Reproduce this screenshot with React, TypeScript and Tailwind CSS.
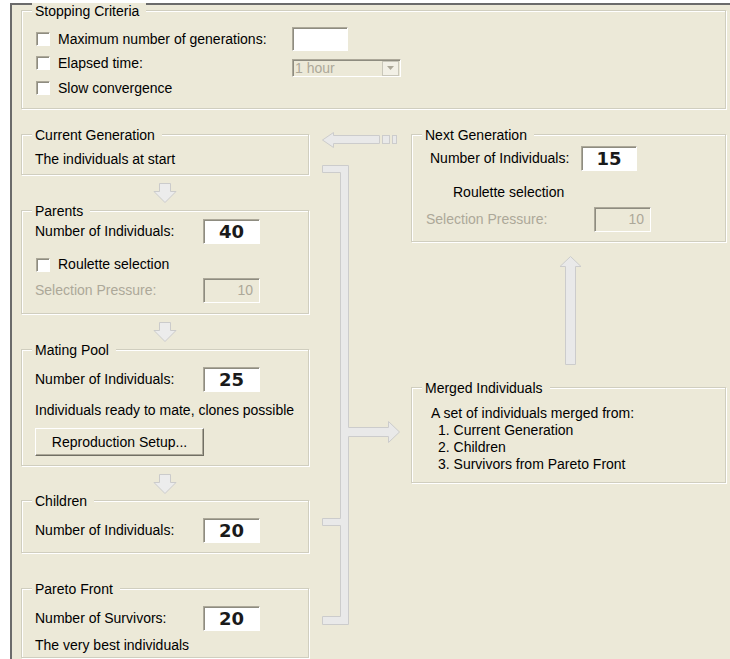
import React from 'react'

// classic XP-ish dialog: evolutionary algorithm setup

interface GroupBoxProps {
  title: string
  className?: string
  children?: React.ReactNode
}

function GroupBox({ title, className = '', children }: GroupBoxProps) {
  return (
    <div
      className={`border border-[#d0cebf] shadow-[inset_1px_1px_0_#ffffff,1px_1px_0_#ffffff] ${className}`}
    >
      <div className="-mt-[8px] ml-[10px] w-fit bg-[#ece9d8] pl-[3px] pr-[7px] leading-[16px]">
        {title}
      </div>
      {children}
    </div>
  )
}

function CheckBox() {
  return (
    <span className="inline-block h-[14px] w-[14px] shrink-0 border border-t-[#aca899] border-l-[#aca899] border-b-white border-r-white bg-white shadow-[inset_1px_1px_0_#8e8c80]" />
  )
}

function NumBox({ value, w = 'w-[57px]' }: { value: string; w?: string }) {
  return (
    <div
      className={`flex h-[25px] ${w} items-center justify-center border border-t-[#aca899] border-l-[#aca899] border-b-white border-r-white bg-white font-['DejaVu_Sans',sans-serif] text-[18px] font-bold leading-none text-[#1a1a1a] shadow-[inset_1px_1px_0_#8e8c80]`}
    >
      {value}
    </div>
  )
}

function DisabledBox({ value }: { value: string }) {
  return (
    <div className="flex h-[25px] w-[57px] items-center justify-end border border-t-[#aca899] border-l-[#aca899] border-b-white border-r-white bg-[#ece9d8] pr-[6px] text-[#aca899] shadow-[inset_1px_1px_0_#8e8c80]">
      {value}
    </div>
  )
}

function DownArrow() {
  return (
    <svg width="24" height="20" viewBox="0 0 24 20">
      <path d="M6.5 0.5H17.5V8.5H23L12 19.5L1 8.5H6.5Z" fill="#ececec" stroke="#cbcbcb" />
    </svg>
  )
}

function ArrowGap({ h = 'h-[35px]', arrow = true }: { h?: string; arrow?: boolean }) {
  return <div className={`flex ${h} justify-center pt-[8px]`}>{arrow && <DownArrow />}</div>
}

export default function App() {
  return (
    <div className="h-[659px] w-[730px] overflow-hidden bg-white pl-[10px] pt-[3px] font-['Liberation_Sans',Arial,sans-serif] text-[14px] text-black">
      <div className="h-full border-l-2 border-t-2 border-[#6b6b6b] bg-[#ece9d8]">
        {/* Stopping criteria */}
        <GroupBox title="Stopping Criteria" className="ml-[9px] mt-[5px] h-[99px] w-[705px]">
          <div className="pl-[14px]">
            <div className="mt-[8px] flex h-[24px] items-center">
              <label className="flex w-[256px] items-center gap-[8px]">
                <CheckBox />
                Maximum number of generations:
              </label>
              <div className="h-[24px] w-[56px] border border-t-[#aca899] border-l-[#aca899] border-b-white border-r-white bg-white shadow-[inset_1px_1px_0_#8e8c80]" />
            </div>
            <div className="flex h-[24px] items-start">
              <label className="flex h-[24px] w-[256px] items-center gap-[8px]">
                <CheckBox />
                Elapsed time:
              </label>
              <div className="mt-[8px] flex h-[18px] w-[109px] items-center border border-t-[#aca899] border-l-[#aca899] border-b-white border-r-white bg-[#ece9d8] shadow-[inset_1px_1px_0_#8e8c80]">
                <span className="ml-[2px] leading-none text-[#aca899]">1 hour</span>
                <span className="ml-auto mr-[1px] flex h-[15px] w-[17px] items-center justify-center border border-[#c9c7ba] bg-[#f2f0e6]">
                  <svg width="7" height="4" viewBox="0 0 7 4">
                    <path d="M0 0H7L3.5 4Z" fill="#aca899" />
                  </svg>
                </span>
              </div>
            </div>
            <div className="flex h-[26px] items-center gap-[8px]">
              <CheckBox />
              Slow convergence
            </div>
          </div>
        </GroupBox>

        <div className="ml-[9px] mt-[25px] flex">
          {/* left column */}
          <div className="flex w-[288px] shrink-0 flex-col">
            <GroupBox title="Current Generation" className="h-[41px]">
              <div className="ml-[13px] mt-[8px] leading-[16px]">The individuals at start</div>
            </GroupBox>
            <ArrowGap />
            <GroupBox title="Parents" className="h-[104px]">
              <div className="pl-[13px]">
                <div className="flex h-[25px] items-center">
                  <span className="w-[168px]">Number of Individuals:</span>
                  <NumBox value="40" />
                </div>
                <div className="mt-[8px] flex h-[25px] items-center gap-[8px] pl-[1px]">
                  <CheckBox />
                  Roulette selection
                </div>
                <div className="mt-[1px] flex h-[25px] items-center">
                  <span className="w-[168px] text-[#aca899]">Selection Pressure:</span>
                  <DisabledBox value="10" />
                </div>
              </div>
            </GroupBox>
            <ArrowGap />
            <GroupBox title="Mating Pool" className="h-[117px]">
              <div className="pl-[13px]">
                <div className="mt-[9px] flex h-[25px] items-center">
                  <span className="w-[168px]">Number of Individuals:</span>
                  <NumBox value="25" />
                </div>
                <div className="mt-[10px] leading-[16px]">Individuals ready to mate, clones possible</div>
                <button className="mt-[10px] flex h-[28px] w-[169px] items-center justify-center border border-t-white border-l-white border-r-[#716f64] border-b-[#716f64] bg-[#ece9d8] shadow-[inset_-1px_-1px_0_#aca899]">
                  Reproduction Setup...
                </button>
              </div>
            </GroupBox>
            <ArrowGap h="h-[34px]" />
            <GroupBox title="Children" className="h-[53px]">
              <div className="pl-[13px]">
                <div className="mt-[9px] flex h-[25px] items-center">
                  <span className="w-[168px]">Number of Individuals:</span>
                  <NumBox value="20" />
                </div>
              </div>
            </GroupBox>
            <ArrowGap arrow={false} />
            <GroupBox title="Pareto Front" className="h-[70px]">
              <div className="pl-[13px]">
                <div className="mt-[9px] flex h-[25px] items-center">
                  <span className="w-[168px]">Number of Survivors:</span>
                  <NumBox value="20" />
                </div>
                <div className="mt-[6px] leading-[16px]">The very best individuals</div>
              </div>
            </GroupBox>
          </div>

          {/* connectors */}
          <svg width="102" height="502" viewBox="309 128 102 502" className="-mt-[6px] shrink-0">
            <path
              d="M322.5 140L333.5 132.5V135.5H379.5V143.5H333.5V147.5Z"
              fill="#e9e9e9"
              stroke="#cccccc"
            />
            <rect x="382.5" y="135.5" width="7" height="8" fill="#e9e9e9" stroke="#cccccc" />
            <rect x="392.5" y="135.5" width="4" height="8" fill="#e9e9e9" stroke="#cccccc" />
            <path
              d="M322.5 165.5H348.5V427.5H388.5V421.5L399.5 432L388.5 442.5V436.5H348.5V624.5H322.5V616.5H340.5V525.5H322.5V518.5H340.5V172.5H322.5Z"
              fill="#e9e9e9"
              stroke="#cccccc"
            />
          </svg>

          {/* right column */}
          <div className="flex w-[315px] shrink-0 flex-col">
            <GroupBox title="Next Generation" className="h-[108px]">
              <div className="ml-[18px] mt-[3px] flex h-[25px] items-center">
                <span className="w-[151px]">Number of Individuals:</span>
                <NumBox value="15" w="w-[56px]" />
              </div>
              <div className="ml-[41px] mt-[13px] leading-[16px]">Roulette selection</div>
              <div className="ml-[14px] mt-[7px] flex h-[25px] items-center">
                <span className="w-[168px] text-[#aca899]">Selection Pressure:</span>
                <DisabledBox value="10" />
              </div>
            </GroupBox>
            <div className="flex h-[145px] justify-center pl-[3px] pt-[14px]">
              <svg width="23" height="110" viewBox="0 0 23 110">
                <path d="M11.5 0.5L22 10.5H16.5V108.5H6.5V10.5H1Z" fill="#e9e9e9" stroke="#cccccc" />
              </svg>
            </div>
            <GroupBox title="Merged Individuals" className="h-[96px]">
              <div className="ml-[19px] mt-[9px] leading-[17px]">A set of individuals merged from:</div>
              <ol className="ml-[26px] leading-[17px]">
                <li>1. Current Generation</li>
                <li>2. Children</li>
                <li>3. Survivors from Pareto Front</li>
              </ol>
            </GroupBox>
          </div>
        </div>
      </div>
    </div>
  )
}
